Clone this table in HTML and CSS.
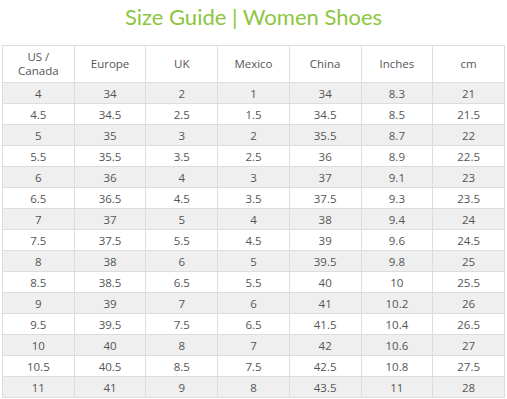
FILE: index.html
```html
<!DOCTYPE html>
<html lang="en">
<head>
  <meta charset="UTF-8" />
  <title>Size Guide | Women Shoes</title>
  <link rel="stylesheet" href="styles.css">
</head>
<body>

  <main>
    <h2 class="guide-title">Size Guide | Women Shoes</h2>
    <table class="size-table">
      <thead>
        <tr>
          <th>US /<br>Canada</th>
          <th>Europe</th>
          <th>UK</th>
          <th>Mexico</th>
          <th>China</th>
          <th>Inches</th>
          <th>cm</th>
        </tr>
      </thead>
      <tbody id="size-body"></tbody>
    </table>
  </main>

  <script>
    const sizes = [
      ["4", "34", "2", "1", "34", "8.3", "21"],
      ["4.5", "34.5", "2.5", "1.5", "34.5", "8.5", "21.5"],
      ["5", "35", "3", "2", "35.5", "8.7", "22"],
      ["5.5", "35.5", "3.5", "2.5", "36", "8.9", "22.5"],
      ["6", "36", "4", "3", "37", "9.1", "23"],
      ["6.5", "36.5", "4.5", "3.5", "37.5", "9.3", "23.5"],
      ["7", "37", "5", "4", "38", "9.4", "24"],
      ["7.5", "37.5", "5.5", "4.5", "39", "9.6", "24.5"],
      ["8", "38", "6", "5", "39.5", "9.8", "25"],
      ["8.5", "38.5", "6.5", "5.5", "40", "10", "25.5"],
      ["9", "39", "7", "6", "41", "10.2", "26"],
      ["9.5", "39.5", "7.5", "6.5", "41.5", "10.4", "26.5"],
      ["10", "40", "8", "7", "42", "10.6", "27"],
      ["10.5", "40.5", "8.5", "7.5", "42.5", "10.8", "27.5"],
      ["11", "41", "9", "8", "43.5", "11", "28"]
    ];

    const tbody = document.getElementById("size-body");
    sizes.forEach((row) => {
      const tr = document.createElement("tr");
      tr.innerHTML = row.map((v) => `<td>${v}</td>`).join("");
      tbody.appendChild(tr);
    });
  </script>

</body>
</html>
```

FILE: styles.css
```css
body {
  margin: 0;
  font-family: 'Open Sans', sans-serif;
  background-color: #fff;
  color: #555;
}
main {
  padding: 0 2px;
}
.guide-title {
  margin: 0;
  height: 45px;
  padding-top: 3px;
  box-sizing: border-box;
  text-align: center;
  font-family: 'Lato', sans-serif;
  font-size: 22px;
  font-weight: 400;
  color: #8cc63e;
}
.size-table {
  width: 503px;
  border-collapse: collapse;
  table-layout: fixed;
  font-size: 11.5px;
}
th, td {
  border: 1px solid #ddd;
  text-align: center;
  padding: 0;
  font-weight: 400;
}
th {
  height: 36px;
  line-height: 14px;
}
td {
  height: 20px;
}
tbody tr:nth-child(odd) td {
  background-color: #efefef;
}
```
